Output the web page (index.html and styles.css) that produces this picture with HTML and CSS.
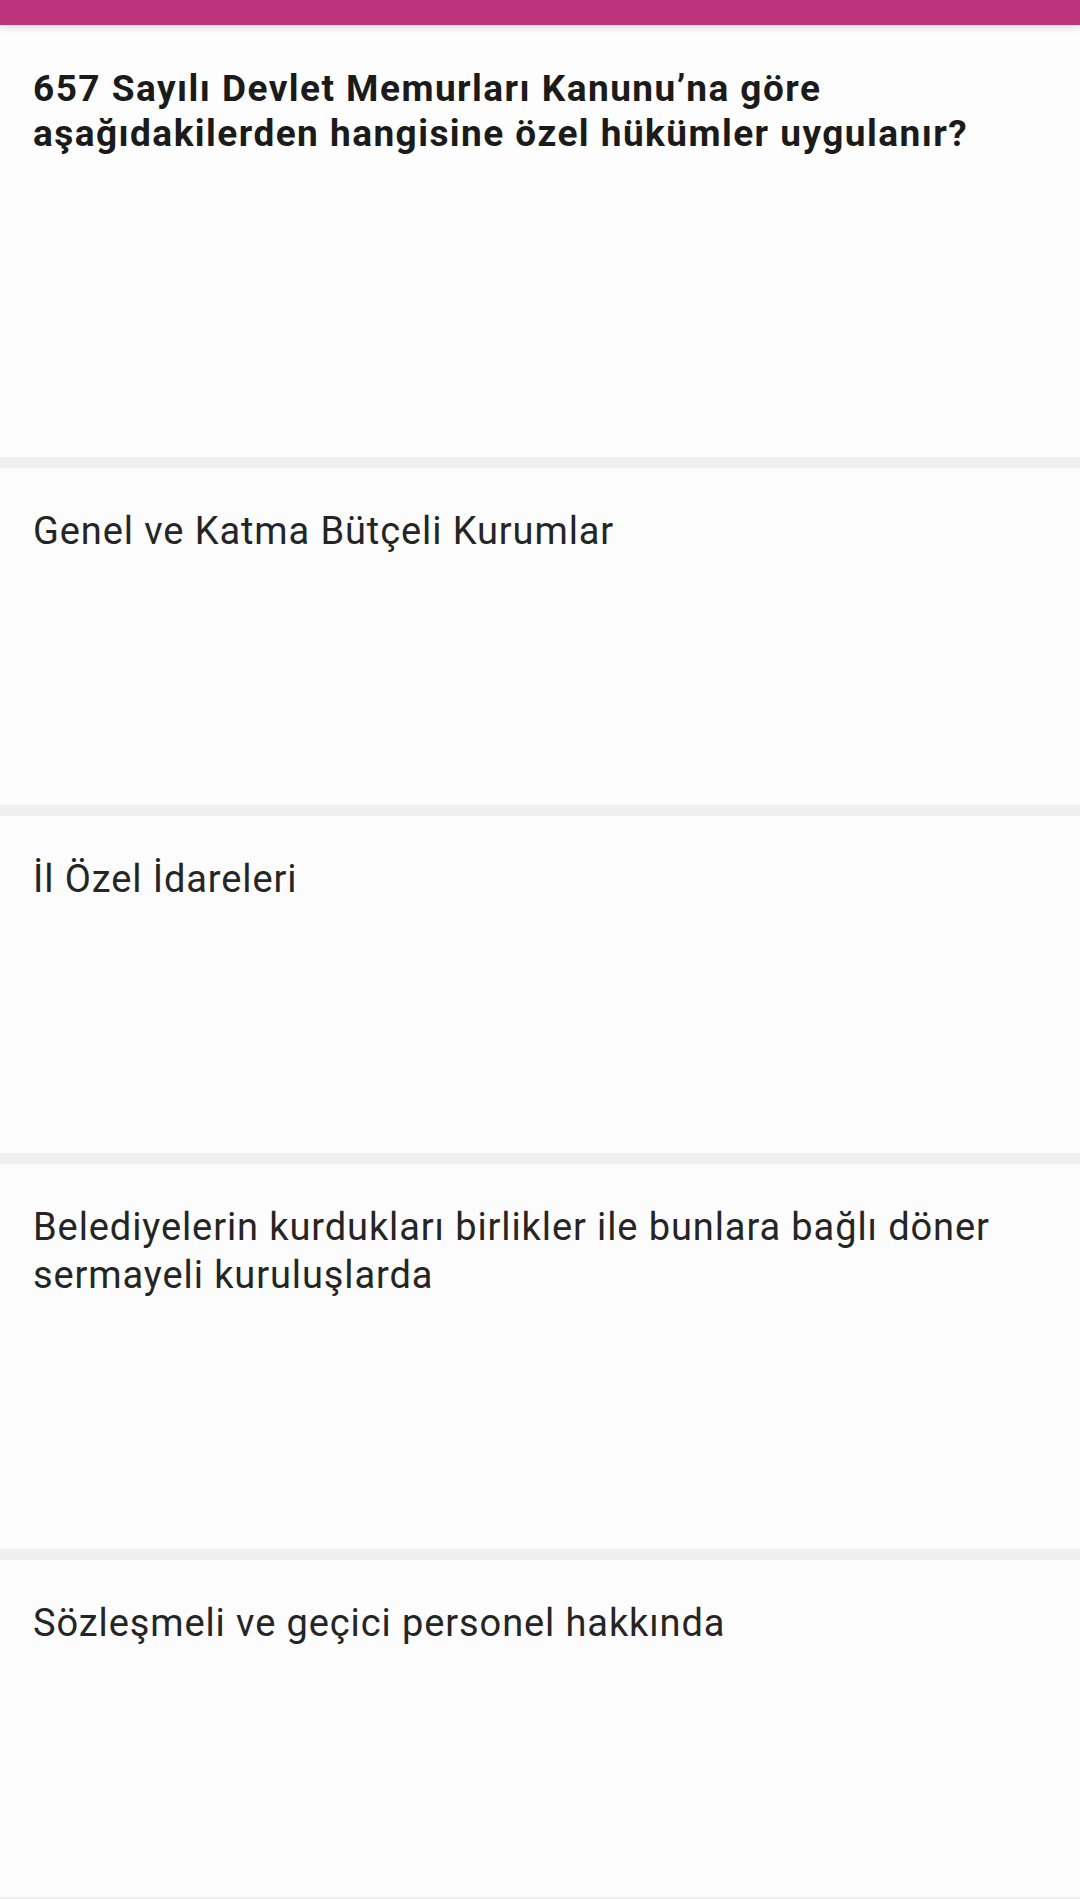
FILE: index.html
```html
<!DOCTYPE html>
<html lang="tr">
    <head>
        <meta charset="UTF-8">
        <meta name="viewport" content="width=device-width, initial-scale=1.0">
        <title>Soru</title>
        <link rel="stylesheet" href="styles.css">
    </head>

    <body>
        <header class="top-bar"></header>
        <main class="quiz">
            <section class="question">
                <h1>657 Sayılı Devlet Memurları Kanunu’na göre aşağıdakilerden hangisine özel hükümler uygulanır?</h1>
            </section>
            <section class="option">
                <p>Genel ve Katma Bütçeli Kurumlar</p>
            </section>
            <section class="option">
                <p>İl Özel İdareleri</p>
            </section>
            <section class="option">
                <p>Belediyelerin kurdukları birlikler ile bunlara bağlı döner sermayeli kuruluşlarda</p>
            </section>
            <section class="option">
                <p>Sözleşmeli ve geçici personel hakkında</p>
            </section>
        </main>
    </body>
</html>
```

FILE: styles.css
```css
body {
    margin: 0;
    background-color: #efefef;
    font-family: Roboto, "Noto Sans", Arial, sans-serif;
    height: 1899px;
    overflow: hidden;
}

.top-bar {
    height: 25px;
    background-color: #be347c;
    box-shadow: 0 2px 8px rgba(0,0,0,0.15);
    position: relative;
    z-index: 1;
}

.quiz {
    display: flex;
    flex-direction: column;
    gap: 11px;
}

.question {
    background-color: #fdfdfd;
    padding: 41px 33px 0;
    height: 432px;
    box-sizing: border-box;
}

.question h1 {
    margin: 0;
    font-size: 37px;
    line-height: 45px;
    letter-spacing: 1.45px;
    font-weight: bold;
    color: #1b1b1b;
}

.option {
    background-color: #fcfcfc;
    padding: 39px 33px 250px;
}

.option p {
    margin: 0;
    font-size: 38px;
    line-height: 48px;
    letter-spacing: 0.9px;
    color: #252525;
}
```
